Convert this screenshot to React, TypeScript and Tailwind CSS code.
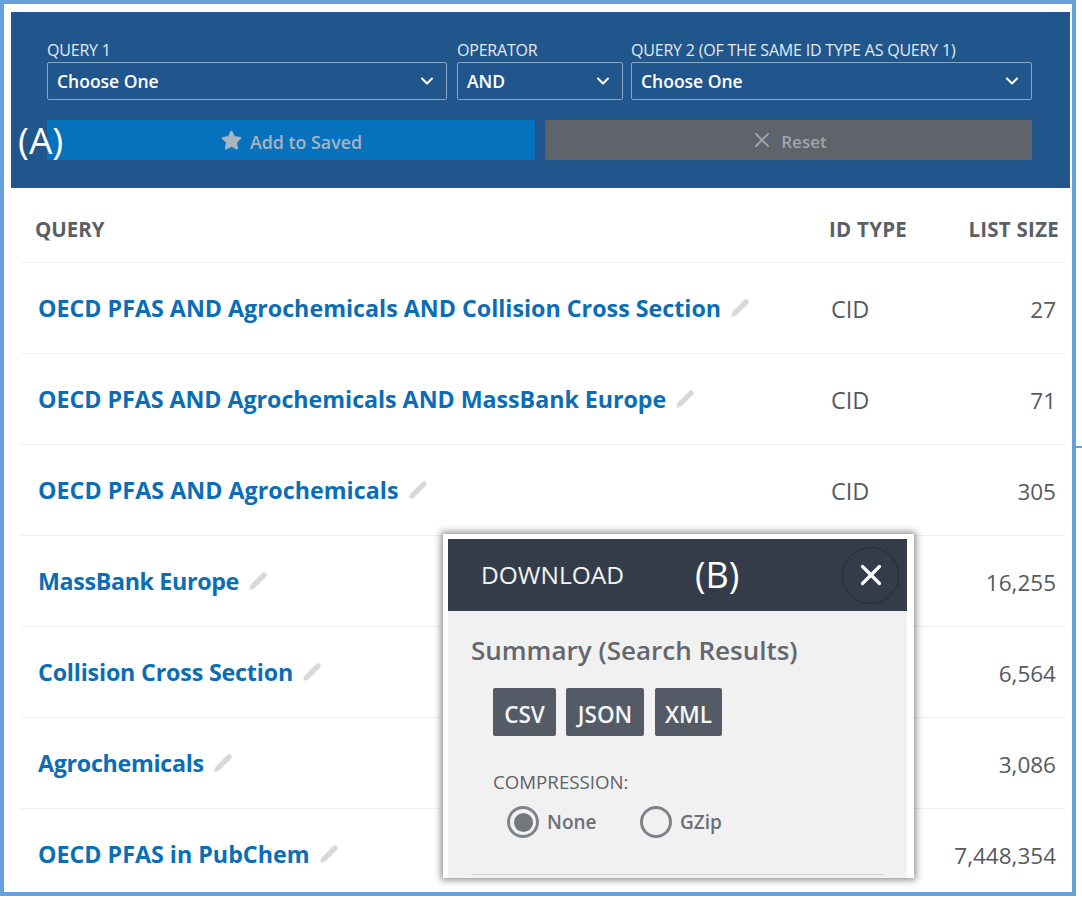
import { ChevronDown, Pencil, Star, X } from "lucide-react";

const font = "font-['Open_Sans','Noto_Sans',sans-serif]";

const rows = [
  { name: "OECD PFAS AND Agrochemicals AND Collision Cross Section", type: "CID", size: "27", fit: "" },
  { name: "OECD PFAS AND Agrochemicals AND MassBank Europe", type: "CID", size: "71", fit: "tracking-[-0.04px]" },
  { name: "OECD PFAS AND Agrochemicals", type: "CID", size: "305", fit: "tracking-[0.03px]" },
  { name: "MassBank Europe", type: "", size: "16,255", fit: "tracking-[-0.35px]" },
  { name: "Collision Cross Section", type: "", size: "6,564", fit: "tracking-[-0.18px]" },
  { name: "Agrochemicals", type: "", size: "3,086", fit: "tracking-[-0.3px]" },
  { name: "OECD PFAS in PubChem", type: "", size: "7,448,354", fit: "" },
];

const Select = ({ label, value, className }: { label: string; value: string; className: string }) => (
  <div className={className}>
    <div className="text-[16px] leading-[24px] text-[#e3ebf3] tracking-[-0.2px] whitespace-nowrap">{label}</div>
    <div className="h-[38px] flex items-center justify-between border border-[#86a6c6] rounded-[2px] pl-[9px] pr-[9px]">
      <span className="text-[17.5px] font-semibold text-white pt-[1px]">{value}</span>
      <ChevronDown className="w-[20px] h-[20px] text-white" strokeWidth={2.5} />
    </div>
  </div>
);

const App = () => {
  return (
    <div className={`relative w-[1082px] h-[900px] overflow-hidden bg-white ${font}`}>
      <div className="w-[1076px] h-[896px] border-[4px] border-[#659fdc] pt-[8px] pl-[7px] pr-[2px] overflow-hidden">
        {/* Query builder */}
        <div className="h-[176px] bg-[#20568c] pt-[26px] pl-[36px] pr-[38px]">
          <div className="flex">
            <Select label="QUERY 1" value="Choose One" className="w-[400px] mr-[10px]" />
            <Select label="OPERATOR" value="AND" className="w-[166px] mr-[8px]" />
            <Select label="QUERY 2 (OF THE SAME ID TYPE AS QUERY 1)" value="Choose One" className="w-[401px]" />
          </div>
          <div className="flex gap-[10px] mt-[20px]">
            <div className="w-[488px] h-[40px] bg-[#0671bd] flex items-center justify-center gap-[7px] text-[#a9b4bf]">
              <Star className="w-[23px] h-[23px] fill-[#a9b4bf]" strokeWidth={1} />
              <span className="text-[17.8px] font-semibold pt-[4px]">Add to Saved</span>
            </div>
            <div className="w-[487px] h-[40px] bg-[#5f636c] rounded-[2px] flex items-center justify-center gap-[7px] text-[#a2a5aa]">
              <X className="w-[24px] h-[24px]" strokeWidth={1.8} />
              <span className="text-[17px] font-semibold pt-[4px]">Reset</span>
            </div>
          </div>
        </div>

        {/* Results table */}
        <div className="ml-[9px] mr-[5px] mt-[9px]">
          <div className="h-[66px] flex items-center border-b border-[#f0f0f0] text-[20.5px] font-bold text-[#5b5f66]">
            <div className="w-[793px] pl-[15px]">QUERY</div>
            <div className="w-[140px] pl-[16px] tracking-[0.25px]">ID TYPE</div>
            <div className="flex-1 text-right pr-[6px] whitespace-nowrap tracking-[0.25px]">LIST SIZE</div>
          </div>
          {rows.map((row) => (
            <div key={row.name} className="h-[91px] flex items-center border-b border-[#f0f0f0]">
              <div className="w-[793px] pl-[18px] flex items-center gap-[9px]">
                <span className={`text-[23.25px] font-bold text-[#0a6db5] whitespace-nowrap pt-[1px] ${row.fit}`}>{row.name}</span>
                <Pencil className="w-[20px] h-[20px] text-[#d8d8d8] fill-[#d8d8d8]" strokeWidth={1} />
              </div>
              <div className="w-[140px] pl-[18px] pt-[3px] text-[23.5px] text-[#555a60]">{row.type}</div>
              <div className="flex-1 text-right pr-[9px] pt-[3px] text-[22.5px] text-[#555a60] whitespace-nowrap">{row.size}</div>
            </div>
          ))}
        </div>
      </div>

      {/* (A) annotation */}
      <div className="absolute left-[18px] top-[116px] text-[37px] leading-[48px] text-white">(A)</div>

      {/* tick on the frame */}
      <div className="absolute left-[1072px] top-[446px] w-[10px] h-[2px] bg-[#659fdc]" />

      {/* Download dialog */}
      <div className="absolute left-[443px] top-[534px] w-[471px] h-[344px] bg-white p-[5px] pr-[7px] pb-0 shadow-[0_0_7px_2px_rgba(0,0,0,0.45)]">
        <div className="h-[72px] bg-[#333c48] flex items-center pl-[33px] pr-[8px] text-white">
          <span className="text-[24.5px] w-[214px] text-[#f2f3f4]">DOWNLOAD</span>
          <span className="text-[36px] leading-[48px]">(B)</span>
          <div className="ml-auto w-[57px] h-[57px] rounded-full border border-[#262d37] flex items-center justify-center">
            <X className="w-[34px] h-[34px]" strokeWidth={2.3} />
          </div>
        </div>
        <div className="h-[267px] bg-[#f1f1f1] pt-[21px] px-[23px]">
          <div className="text-[26px] leading-[36px] font-semibold text-[#63676d]">Summary (Search Results)</div>
          <div className="flex ml-[22px] mt-[20px] text-[22.5px] font-semibold text-[#f5f5f5]">
            <div className="w-[63px] h-[48px] bg-[#545b67] rounded-[2px] flex items-center justify-center pt-[5px]">CSV</div>
            <div className="w-[78px] h-[48px] ml-[10px] bg-[#545b67] rounded-[2px] flex items-center justify-center pt-[5px]">JSON</div>
            <div className="w-[67px] h-[48px] ml-[11px] bg-[#545b67] rounded-[2px] flex items-center justify-center pt-[5px]">XML</div>
          </div>
          <div className="ml-[22px] mt-[32px] text-[18.7px] leading-[28px] text-[#5e6167]">COMPRESSION:</div>
          <div className="flex items-center mt-[10px] ml-[36px] text-[19px] font-semibold text-[#6b6f75]">
            <div className="w-[32px] h-[32px] rounded-full border-[3px] border-[#7f8388] flex items-center justify-center">
              <div className="w-[19px] h-[19px] rounded-full bg-[#74787e]" />
            </div>
            <span className="ml-[8px] w-[93px]">None</span>
            <div className="w-[32px] h-[32px] rounded-full border-[3px] border-[#7f8388]" />
            <span className="ml-[8px]">GZip</span>
          </div>
          <div className="mt-[36px] h-px bg-[#d6d6d6]" />
        </div>
      </div>
    </div>
  );
};

export default App;
